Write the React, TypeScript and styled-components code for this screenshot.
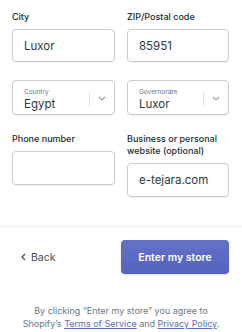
import React from "react";
import styled, { createGlobalStyle } from "styled-components";

const GlobalStyle = createGlobalStyle`
  html, body {
    margin: 0;
    padding: 0;
    background: #ffffff;
    font-family: Inter, "Noto Sans", sans-serif;
    -webkit-font-smoothing: antialiased;
  }
`;

const Page = styled.div`
  width: 242px;
  display: flex;
  flex-direction: column;
`;

const Form = styled.div`
  display: grid;
  grid-template-columns: 103px 102px;
  column-gap: 12px;
  row-gap: 18px;
  padding: 11px 13px 0 12px;
  align-items: start;
`;

const Field = styled.div`
  display: flex;
  flex-direction: column;
`;

const Label = styled.label`
  font-size: 9px;
  line-height: 12px;
  font-weight: 500;
  color: #212b36;
  margin-bottom: 6px;
`;

const Input = styled.div<{ $tall?: boolean }>`
  box-sizing: border-box;
  height: ${(p) => (p.$tall ? 34 : 33)}px;
  border: 1px solid #c4cdd5;
  border-radius: 4px;
  box-shadow: 0 1px 0 rgba(22, 29, 37, 0.05);
  padding: 0 11px;
  display: flex;
  align-items: center;
  font-size: 11.5px;
  color: #2e3641;
`;

const Select = styled.div`
  box-sizing: border-box;
  height: 35px;
  border: 1px solid #c4cdd5;
  border-radius: 4px;
  box-shadow: 0 1px 0 rgba(22, 29, 37, 0.05);
  display: flex;
  align-items: center;
  padding-left: 11px;
`;

const SelectText = styled.div`
  flex: 1;
  display: flex;
  flex-direction: column;
  padding-top: 3px;
`;

const SelectLabel = styled.span`
  font-size: 6.5px;
  line-height: 9px;
  color: #637381;
`;

const SelectValue = styled.span`
  font-size: 11.5px;
  line-height: 14px;
  color: #2e3641;
`;

const Separator = styled.div`
  width: 1px;
  height: 14px;
  margin-top: 2px;
  background: #dfe3e8;
`;

const Chevron = styled.div`
  width: 24px;
  display: flex;
  justify-content: center;
  align-items: center;
  padding-top: 2px;
  color: #919eab;
`;

const Divider = styled.div`
  height: 1px;
  background: #ebeef0;
  margin-top: 29px;
`;

const Actions = styled.div`
  display: flex;
  align-items: center;
  justify-content: space-between;
  padding: 13px 13px 0 21px;
`;

const BackLink = styled.div`
  display: flex;
  align-items: center;
  gap: 5px;
  font-size: 10.5px;
  color: #454f5b;
`;

const PrimaryButton = styled.button`
  width: 108px;
  height: 34px;
  border: none;
  border-radius: 4px;
  background: linear-gradient(180deg, #6371c7, #5563c1);
  box-shadow: 0 1px 2px rgba(66, 71, 112, 0.2);
  color: #ffffff;
  font-family: Inter, "Noto Sans", sans-serif;
  font-size: 10.5px;
  font-weight: 600;
`;

const Legal = styled.p`
  margin: 30px 0 0;
  text-align: center;
  font-size: 9px;
  line-height: 13px;
  color: #6b7785;
`;

const Link = styled.a`
  color: #5c6ac4;
  text-decoration: underline;
`;

const ChevronDown = () => (
  <svg width="8" height="5" viewBox="0 0 8 5" fill="none">
    <path d="M1 1l3 3 3-3" stroke="currentColor" strokeWidth="1.1" />
  </svg>
);

const SelectBox: React.FC<{ label: string; value: string }> = ({ label, value }) => (
  <Select>
    <SelectText>
      <SelectLabel>{label}</SelectLabel>
      <SelectValue>{value}</SelectValue>
    </SelectText>
    <Separator />
    <Chevron>
      <ChevronDown />
    </Chevron>
  </Select>
);

export default function App() {
  return (
    <Page>
      <GlobalStyle />
      <Form>
        <Field>
          <Label>City</Label>
          <Input>Luxor</Input>
        </Field>
        <Field>
          <Label>ZIP/Postal code</Label>
          <Input>85951</Input>
        </Field>
        <SelectBox label="Country" value="Egypt" />
        <SelectBox label="Governorate" value="Luxor" />
        <Field>
          <Label>Phone number</Label>
          <Input $tall />
        </Field>
        <Field>
          <Label>
            Business or personal
            <br />
            website (optional)
          </Label>
          <Input $tall>e-tejara.com</Input>
        </Field>
      </Form>
      <Divider />
      <Actions>
        <BackLink>
          <svg width="5" height="8" viewBox="0 0 5 8" fill="none">
            <path d="M4 1L1 4l3 3" stroke="currentColor" strokeWidth="1.2" />
          </svg>
          Back
        </BackLink>
        <PrimaryButton>Enter my store</PrimaryButton>
      </Actions>
      <Legal>
        By clicking “Enter my store” you agree to
        <br />
        Shopify’s <Link>Terms of Service</Link> and <Link>Privacy Policy</Link>.
      </Legal>
    </Page>
  );
}
